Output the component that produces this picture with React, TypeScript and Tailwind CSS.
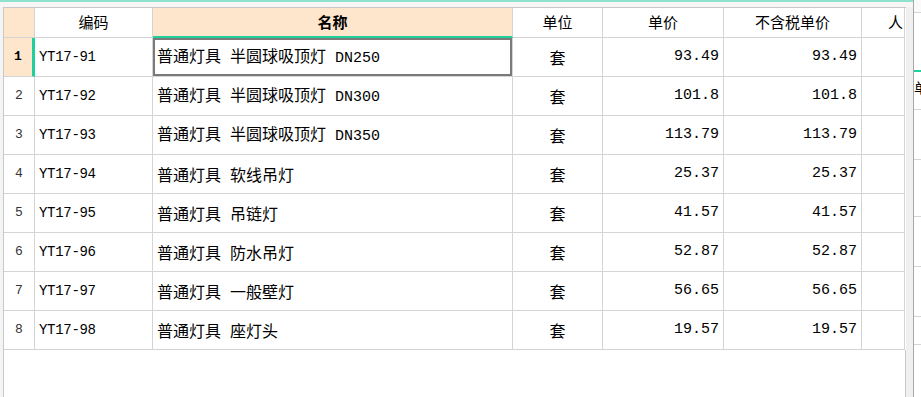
import React from 'react';

// rows of the quota list: code, name, unit, price, price without tax
const rows = [
  ['YT17-91', '普通灯具 半圆球吸顶灯 DN250', '套', '93.49', '93.49'],
  ['YT17-92', '普通灯具 半圆球吸顶灯 DN300', '套', '101.8', '101.8'],
  ['YT17-93', '普通灯具 半圆球吸顶灯 DN350', '套', '113.79', '113.79'],
  ['YT17-94', '普通灯具 软线吊灯', '套', '25.37', '25.37'],
  ['YT17-95', '普通灯具 吊链灯', '套', '41.57', '41.57'],
  ['YT17-96', '普通灯具 防水吊灯', '套', '52.87', '52.87'],
  ['YT17-97', '普通灯具 一般壁灯', '套', '56.65', '56.65'],
  ['YT17-98', '普通灯具 座灯头', '套', '19.57', '19.57'],
];

const cjk = "font-['Noto_Sans_CJK_SC',sans-serif]";
const mono = "font-['Liberation_Mono','Noto_Sans_CJK_SC',monospace]";
const grid = 'grid grid-cols-[31px_118px_360px_90px_121px_138px_43px]';
const cell = 'border-r border-b border-[#d4d4d4] flex items-center overflow-hidden whitespace-nowrap';

const App = () => {
  return (
    <div className="w-[921px] h-[397px] flex overflow-hidden bg-white text-black">
      <div className="w-[913px] flex flex-col">
        <div className="h-[2px] bg-[#8fe3cd]" />
        <div className="h-[5px] bg-[#f6f6f6]" />
        <div className="flex flex-1">
          <div className="w-[3px] bg-[#f4f4f4]" />
          <div className="w-[903px] border-l border-t border-[#c8c8c8] flex flex-col">
            <div className={`${grid} h-[30px] ${cjk} text-[15px]`}>
              <div className={`${cell} bg-[#fde6cc]`} />
              <div className={`${cell} justify-center`}>编码</div>
              <div className={`${cell} justify-center bg-[#fde6cc] font-bold border-b-2 border-b-[#1fcf9c]`}>名称</div>
              <div className={`${cell} justify-center`}>单位</div>
              <div className={`${cell} justify-center`}>单价</div>
              <div className={`${cell} justify-center`}>不含税单价</div>
              <div className={`${cell} justify-end pr-[1px]`}>人</div>
            </div>
            {rows.map((r, i) => (
              <div key={r[0]} className={`${grid} h-[39px]`}>
                <div
                  className={`${cell} justify-center ${mono} text-[13px] ${
                    i === 0 ? 'bg-[#fde6cc] font-bold border-r-[3px] border-r-[#1fcf9c]' : 'text-[#333]'
                  }`}
                >
                  {i + 1}
                </div>
                <div className={`${cell} pl-[4px] ${mono} text-[14px] tracking-[-0.3px]`}>{r[0]}</div>
                <div className={`${cell} relative pl-[4px] ${cjk} text-[16px]`}>
                  <span>
                    {r[1].split(' ').map((part, j) => (
                      <span key={j} className={/[A-Z]/.test(part) ? `${mono} text-[15px] ml-[9px]` : j > 0 ? 'ml-[9px]' : ''}>
                        {part}
                      </span>
                    ))}
                  </span>
                  {i === 0 && <div className="absolute inset-0 border-2 border-[#7a7a7a]" />}
                </div>
                <div className={`${cell} justify-center ${cjk} text-[16px]`}>{r[2]}</div>
                <div className={`${cell} justify-end pr-[4px] ${mono} text-[15px]`}>{r[3]}</div>
                <div className={`${cell} justify-end pr-[4px] ${mono} text-[15px]`}>{r[4]}</div>
                <div className={cell} />
              </div>
            ))}
            <div className="flex-1 border-r border-[#c8c8c8]" />
          </div>
          <div className="w-[7px] bg-[#f0f0f0]" />
        </div>
      </div>
      <div className="w-[8px] border-l border-[#a8a8a8] flex flex-col bg-white overflow-hidden">
        <div className="h-[13px] border-b border-[#d4d4d4] bg-[#fafafa]" />
        <div className="h-[57px]" />
        <div className="h-[2px] bg-[#1fcf9c]" />
        <div className={`h-[38px] border-b border-[#d4d4d4] ${cjk} text-[14px] leading-[30px] whitespace-nowrap`}>单</div>
        <div className="h-[50px] border-b border-[#d4d4d4]" />
        <div className="h-[57px] border-b border-[#d4d4d4]" />
        <div className="h-[50px] border-b border-[#d4d4d4]" />
        <div className="h-[50px] border-b border-[#d4d4d4]" />
        <div className="h-[28px] border-b border-[#d4d4d4]" />
        <div className="flex-1" />
      </div>
    </div>
  );
};

export default App;
